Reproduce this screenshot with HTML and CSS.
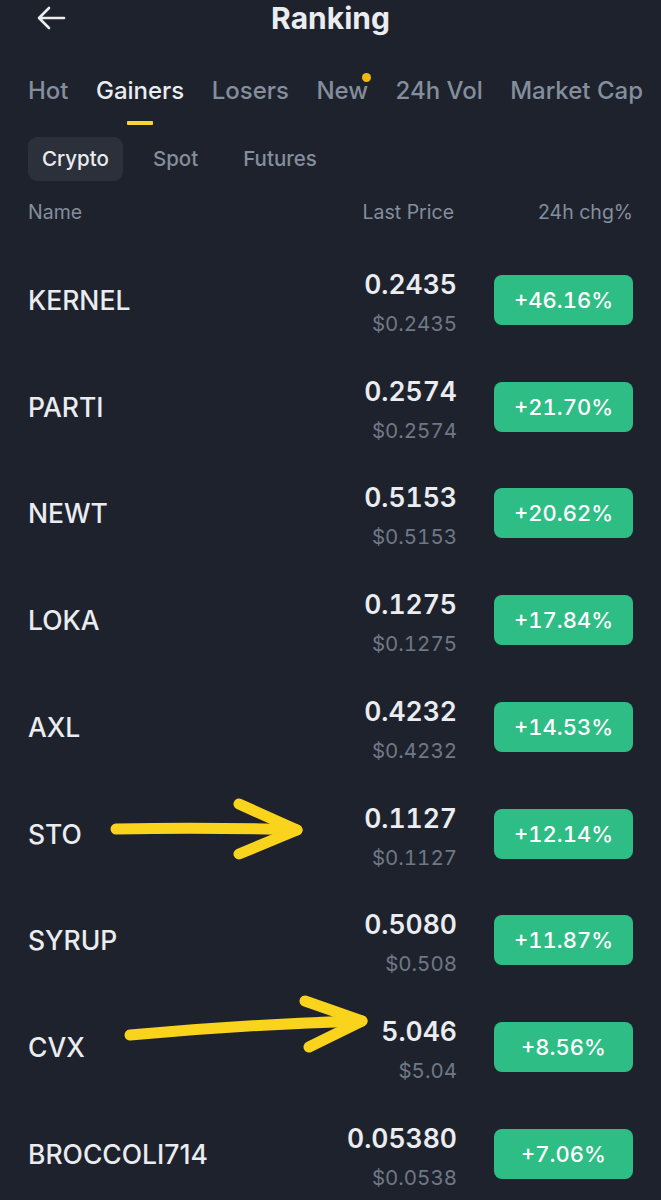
FILE: index.html
```html
<!DOCTYPE html>
<html lang="en">
<head>
<meta charset="utf-8">
<title>Ranking</title>
<link rel="stylesheet" href="styles.css">
</head>
<body>
<div class="app">
  <header class="topbar">
    <span class="back">
      <svg width="30" height="24" viewBox="0 0 30 24" fill="none" stroke="#eaecef" stroke-width="2.6" stroke-linecap="round" stroke-linejoin="round"><path d="M28 12H3M13 2L3 12l10 10"/></svg>
    </span>
    <h1 class="title">Ranking</h1>
    <span></span>
  </header>

  <nav class="tabs">
    <span class="tab">Hot</span>
    <span class="tab active">Gainers<i class="bar"></i></span>
    <span class="tab">Losers</span>
    <span class="tab new">New<i class="dot"></i></span>
    <span class="tab">24h Vol</span>
    <span class="tab">Market Cap</span>
  </nav>

  <div class="chips">
    <span class="chip on">Crypto</span>
    <span class="chip">Spot</span>
    <span class="chip">Futures</span>
  </div>

  <div class="thead">
    <span class="c-name">Name</span>
    <span class="c-price">Last Price</span>
    <span class="c-chg">24h chg%</span>
  </div>

  <ul class="list">
    <li class="row"><span class="name">KERNEL</span><span class="price"><b>0.2435</b><small>$0.2435</small></span><span class="badge">+46.16%</span></li>
    <li class="row"><span class="name">PARTI</span><span class="price"><b>0.2574</b><small>$0.2574</small></span><span class="badge">+21.70%</span></li>
    <li class="row"><span class="name">NEWT</span><span class="price"><b>0.5153</b><small>$0.5153</small></span><span class="badge">+20.62%</span></li>
    <li class="row"><span class="name">LOKA</span><span class="price"><b>0.1275</b><small>$0.1275</small></span><span class="badge">+17.84%</span></li>
    <li class="row"><span class="name">AXL</span><span class="price"><b>0.4232</b><small>$0.4232</small></span><span class="badge">+14.53%</span></li>
    <li class="row"><span class="name">STO</span><span class="price"><b>0.1127</b><small>$0.1127</small></span><span class="badge">+12.14%</span></li>
    <li class="row"><span class="name">SYRUP</span><span class="price"><b>0.5080</b><small>$0.508</small></span><span class="badge">+11.87%</span></li>
    <li class="row"><span class="name">CVX</span><span class="price"><b>5.046</b><small>$5.04</small></span><span class="badge">+8.56%</span></li>
    <li class="row"><span class="name">BROCCOLI714</span><span class="price"><b>0.05380</b><small>$0.0538</small></span><span class="badge">+7.06%</span></li>
  </ul>

  <svg class="annot" width="661" height="1200" viewBox="0 0 661 1200" fill="none" stroke="#f9d31c" stroke-width="11" stroke-linecap="round" stroke-linejoin="round">
    <path d="M116 829 Q 210 827 297 830"/>
    <path d="M239 804 L 297 830 L 239 854"/>
    <path d="M130 1035 Q 250 1024 362 1021"/>
    <path d="M305 1001 L 362 1021 L 309 1047"/>
  </svg>
</div>
</body>
</html>
```

FILE: styles.css
```css
* { box-sizing: border-box; }
html, body { margin: 0; padding: 0; }
body {
  background: #1e222d;
  font-family: Inter, "Liberation Sans", Arial, sans-serif;
  color: #eaecef;
}
.app {
  position: relative;
  width: 661px;
  height: 1200px;
  overflow: hidden;
  background: #1e222d;
}
.topbar {
  display: grid;
  grid-template-columns: 1fr auto 1fr;
  align-items: center;
  height: 36px;
}
.back {
  display: flex;
  align-items: center;
  padding-left: 36px;
}
.title {
  margin: 0;
  font-size: 30px;
  font-weight: 700;
  line-height: 36px;
  color: #eaecef;
}
.tabs {
  display: flex;
  justify-content: space-between;
  align-items: flex-start;
  margin-top: 34px;
  padding: 0 18px 0 28px;
}
.tab {
  position: relative;
  display: flex;
  flex-direction: column;
  align-items: center;
  font-size: 24px;
  font-weight: 500;
  line-height: 42px;
  color: #848e9c;
  white-space: nowrap;
}
.tab.active { color: #eaecef; }
.bar {
  display: block;
  width: 26px;
  height: 4px;
  margin-top: 9px;
  background: #fcd535;
  border-radius: 1px;
}
.dot {
  position: absolute;
  top: 3px;
  right: -3px;
  width: 9px;
  height: 9px;
  border-radius: 50%;
  background: #f0b90b;
}
.chips {
  display: flex;
  gap: 15px;
  margin-top: 12px;
  padding-left: 28px;
}
.chip {
  height: 44px;
  line-height: 44px;
  padding: 0 15px;
  border-radius: 9px;
  font-size: 20.5px;
  font-weight: 500;
  color: #848e9c;
}
.chip.on {
  background: #2b303b;
  color: #eaecef;
  padding: 0 14px;
}
.thead {
  display: flex;
  align-items: flex-start;
  height: 65.6px;
  padding: 20px 28px 0 28px;
  font-size: 19.5px;
  line-height: 22px;
  color: #848e9c;
}
.c-name { flex: 1; }
.c-price { padding-right: 3px; }
.c-chg { width: 176px; text-align: right; }
.list {
  list-style: none;
  margin: 0;
  padding: 0;
}
.row {
  display: flex;
  align-items: center;
  height: 106.75px;
  padding: 0 28px;
}
.name {
  flex: 1;
  font-size: 26.5px;
  font-weight: 500;
  color: #eaecef;
}
.price {
  display: flex;
  flex-direction: column;
  align-items: flex-end;
  padding-top: 5px;
  font-variant-numeric: tabular-nums;
}
.price b {
  font-size: 26.5px;
  font-weight: 600;
  line-height: 30px;
  color: #eaecef;
}
.price small {
  margin-top: 13px;
  font-size: 20.5px;
  line-height: 24px;
  color: #6f7886;
}
.badge {
  width: 139px;
  height: 50px;
  margin-left: 37px;
  border-radius: 8px;
  background: #2ebd85;
  color: #ffffff;
  font-size: 22px;
  font-weight: 500;
  line-height: 50px;
  text-align: center;
  font-variant-numeric: tabular-nums;
}
.annot {
  position: absolute;
  top: 0;
  left: 0;
  pointer-events: none;
}
```
